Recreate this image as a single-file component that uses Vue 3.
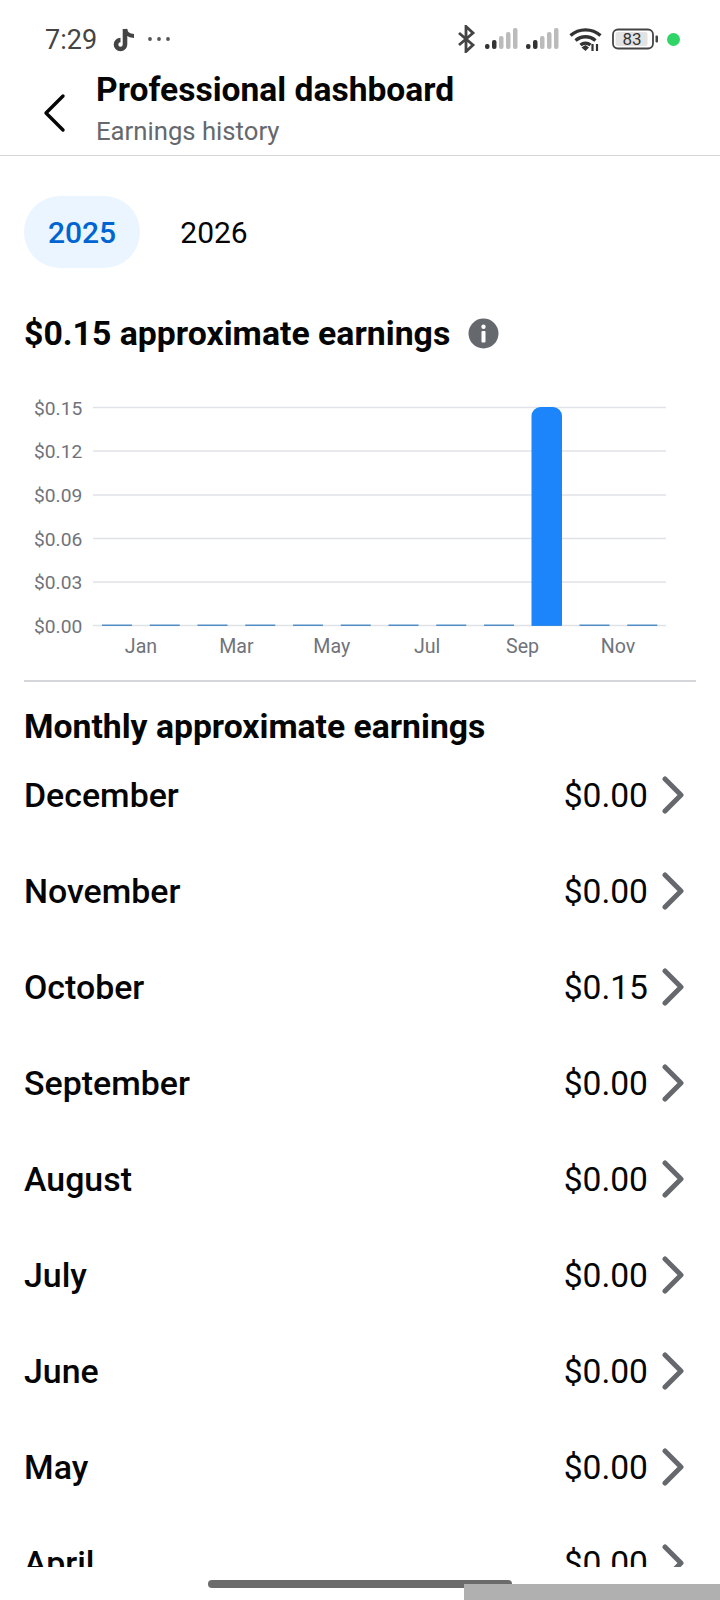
<script setup>
const rows = [
  ['December', '$0.00'], ['November', '$0.00'], ['October', '$0.15'], ['September', '$0.00'],
  ['August', '$0.00'], ['July', '$0.00'], ['June', '$0.00'], ['May', '$0.00'], ['April', '$0.00'],
]
const yLabels = ['$0.15', '$0.12', '$0.09', '$0.06', '$0.03', '$0.00']
const gridY = [407.5, 451, 495, 538.5, 582, 625.5].map(y => y - 380)
const xLabels = ['Jan', 'Mar', 'May', 'Jul', 'Sep', 'Nov']
const bars = Array.from({ length: 12 }, (_, i) => 102 + i * 47.75)
</script>

<template>
  <div class="page">
    <div class="status">
      <span class="time">7:29</span>
      <svg class="tiktok" width="24" height="26" viewBox="0 0 24 26">
        <path d="M13 2v15.500a4.500 4.500 0 1 1-4.500-4.500" fill="none" stroke="#444" stroke-width="4.600"/>
        <path d="M13 2c.3 4 3.500 7 9 7" fill="none" stroke="#444" stroke-width="4.200"/>
      </svg>
      <svg class="dots" width="24" height="6" viewBox="0 0 24 6">
        <circle cx="3" cy="3" r="1.900" fill="#555"/><circle cx="12" cy="3" r="1.900" fill="#555"/><circle cx="21" cy="3" r="1.900" fill="#555"/>
      </svg>
      <div class="status-right">
        <svg width="19" height="28" viewBox="0 0 19 28">
          <path d="M2 8l14 12-7 6.500V1.500l7 6.500L2 20" fill="none" stroke="#444" stroke-width="2.800"/>
        </svg>
        <svg class="sig" width="33" height="22" viewBox="0 0 33 22">
          <rect x="0" y="16" width="4.500" height="5" rx="2" fill="#333"/><rect x="7" y="12" width="4.500" height="9" rx="2" fill="#333"/>
          <rect x="14" y="8" width="4.500" height="13" rx="2" fill="#bbb"/><rect x="21" y="4" width="4.500" height="17" rx="2" fill="#bbb"/><rect x="28" y="0" width="4.500" height="21" rx="2" fill="#bbb"/>
        </svg>
        <svg class="sig2" width="33" height="22" viewBox="0 0 33 22">
          <rect x="0" y="16" width="4.500" height="5" rx="2" fill="#333"/><rect x="7" y="12" width="4.500" height="9" rx="2" fill="#333"/>
          <rect x="14" y="8" width="4.500" height="13" rx="2" fill="#bbb"/><rect x="21" y="4" width="4.500" height="17" rx="2" fill="#bbb"/><rect x="28" y="0" width="4.500" height="21" rx="2" fill="#bbb"/>
        </svg>
        <svg class="wifi" width="33" height="25" viewBox="0 0 33 25">
          <path d="M1.500 8.500C10 1 23 1 31.500 8.500M6.500 13.500c6-5 14-5 20 0M11.500 18c3-2.500 7-2.500 10 0" fill="none" stroke="#333" stroke-width="3.400"/>
          <path d="M12.500 20.500l4-2.500 3.500 2.500-3.500 3.500z" fill="#333"/>
          <path d="M23.500 17v7M28 17v7" stroke="#333" stroke-width="2.200"/>
        </svg>
        <svg class="batt" width="47" height="22" viewBox="0 0 47 22">
          <rect x="1" y="1.500" width="40" height="19" rx="5" fill="none" stroke="#444" stroke-width="1.800"/>
          <rect x="3.500" y="4" width="32" height="14" rx="2" fill="#e3e3e3"/>
          <rect x="43.500" y="7.500" width="2.500" height="7" rx="1" fill="#444"/>
          <text x="20" y="17" text-anchor="middle" class="batt-text">83</text>
        </svg>
        <span class="green"></span>
      </div>
    </div>

    <header class="head">
      <svg class="back" width="24" height="40" viewBox="0 0 24 40">
        <path d="M21 3L4 20l17 17" fill="none" stroke="#050505" stroke-width="3.400" stroke-linecap="round" stroke-linejoin="round"/>
      </svg>
      <div class="head-text">
        <div class="title">Professional dashboard</div>
        <div class="sub">Earnings history</div>
      </div>
    </header>

    <div class="content">
      <div class="tabs">
        <div class="tab active">2025</div>
        <div class="tab">2026</div>
      </div>

      <div class="total">
        <h2>$0.15 approximate earnings</h2>
        <svg width="31" height="31" viewBox="0 0 31 31">
          <circle cx="15.500" cy="15.500" r="15" fill="#65686c"/>
          <circle cx="15.500" cy="8.800" r="2.200" fill="#fff"/>
          <rect x="13.500" y="13" width="4" height="11.500" rx="1" fill="#fff"/>
        </svg>
      </div>

      <svg class="chart" width="720" height="280" viewBox="0 0 720 280">
        <g v-for="(y, i) in gridY" :key="i">
          <text x="34" :y="y + 7" class="axis axis-y">{{ yLabels[i] }}</text>
          <line x1="93" x2="666" :y1="y" :y2="y" stroke="#e0e2e7" stroke-width="1.500"/>
        </g>
        <rect v-for="(x, i) in bars" :key="'b' + i" :x="x" y="244.600" width="30" height="1.200" fill="#2f79bd"/>
        <path d="M531.500 245.500V36a9 9 0 0 1 9-9h12.500a9 9 0 0 1 9 9v209.500z" fill="#1d85fc"/>
        <text v-for="(m, i) in xLabels" :key="m" :x="141 + i * 95.4" y="273" text-anchor="middle" class="axis">{{ m }}</text>
      </svg>

      <div class="divider"></div>

      <h3>Monthly approximate earnings</h3>

      <div class="list">
        <div v-for="r in rows" :key="r[0]" class="row">
          <span class="month">{{ r[0] }}</span>
          <span class="amount">{{ r[1] }}</span>
          <svg class="chev" width="22" height="38" viewBox="0 0 22 38">
            <path d="M3 3l16 16L3 35" fill="none" stroke="#65686c" stroke-width="5" stroke-linecap="round" stroke-linejoin="round"/>
          </svg>
        </div>
      </div>
    </div>

    <div class="home"></div>
    <div class="gray"></div>
  </div>
</template>

<style scoped>
.page {
  position: relative;
  width: 720px;
  height: 1600px;
  overflow: hidden;
  background: #fff;
  font-family: Roboto, sans-serif;
  color: #050505;
}
.status {
  height: 78px;
  display: flex;
  align-items: center;
  padding: 0 40px 0 45px;
  box-sizing: border-box;
}
.time { font-size: 27px; color: #444; width: 67px; margin-top: 2px; }
.tiktok { margin-right: 11px; margin-top: 1px; }
.status-right { margin-left: auto; display: flex; align-items: center; }
.sig { margin-left: 9px; }
.sig2 { margin-left: 8px; }
.wifi { margin-left: 10px; }
.batt { margin-left: 10px; }
.batt-text { font-size: 17px; fill: #333; font-family: Roboto, sans-serif; }
.green { width: 13px; height: 13px; border-radius: 50%; background: #2fd566; margin-left: 8px; }
.head {
  height: 78px;
  box-sizing: border-box;
  border-bottom: 1.500px solid #d5d6d9;
  display: flex;
  padding-left: 42px;
}
.back { margin-top: 15px; margin-right: 30px; }
.title { font-size: 33.600px; font-weight: 700; line-height: 38px; margin-top: -7px; }
.sub { font-size: 25.700px; color: #65686c; line-height: 32px; margin-top: 6px; }
.content { height: 1411px; overflow: hidden; padding: 0 24px; box-sizing: border-box; }
.tabs { display: flex; padding-top: 40px; }
.tab {
  height: 72px;
  width: 116px;
  border-radius: 36px;
  display: flex;
  align-items: center;
  justify-content: center;
  font-size: 30px;
}
.tab.active { background: #ebf5ff; color: #0064d1; font-weight: 500; margin-right: 4px; }
.tab:not(.active) { width: 140px; }
.total { display: flex; align-items: center; margin-top: 46px; height: 38px; }
h2 { margin: 0 18px 0 0; font-size: 33.800px; font-weight: 700; }
.chart { display: block; margin: 28px 0 0 -24px; }
.axis { font-size: 19.600px; fill: #70737a; font-family: Roboto, sans-serif; }
.axis-y { font-size: 19.200px; }
.divider { height: 1.500px; background: #d5d6d9; margin-top: 20px; }
h3 { margin: 26px 0 0; font-size: 33.700px; font-weight: 700; line-height: 38px; }
.list { margin-top: 2px; }
.row { height: 96px; display: flex; align-items: center; }
.month { font-size: 33.900px; font-weight: 500; }
.amount { font-size: 33.600px; margin-left: auto; margin-right: 14px; }
.chev { margin-right: 12px; margin-bottom: 2px; }
.home {
  position: absolute;
  left: 208px;
  top: 1580px;
  width: 304px;
  height: 8px;
  border-radius: 4px;
  background: #6b6b6b;
}
.gray {
  position: absolute;
  left: 464px;
  top: 1584px;
  width: 256px;
  height: 16px;
  background: #b0b0b0;
}
</style>
